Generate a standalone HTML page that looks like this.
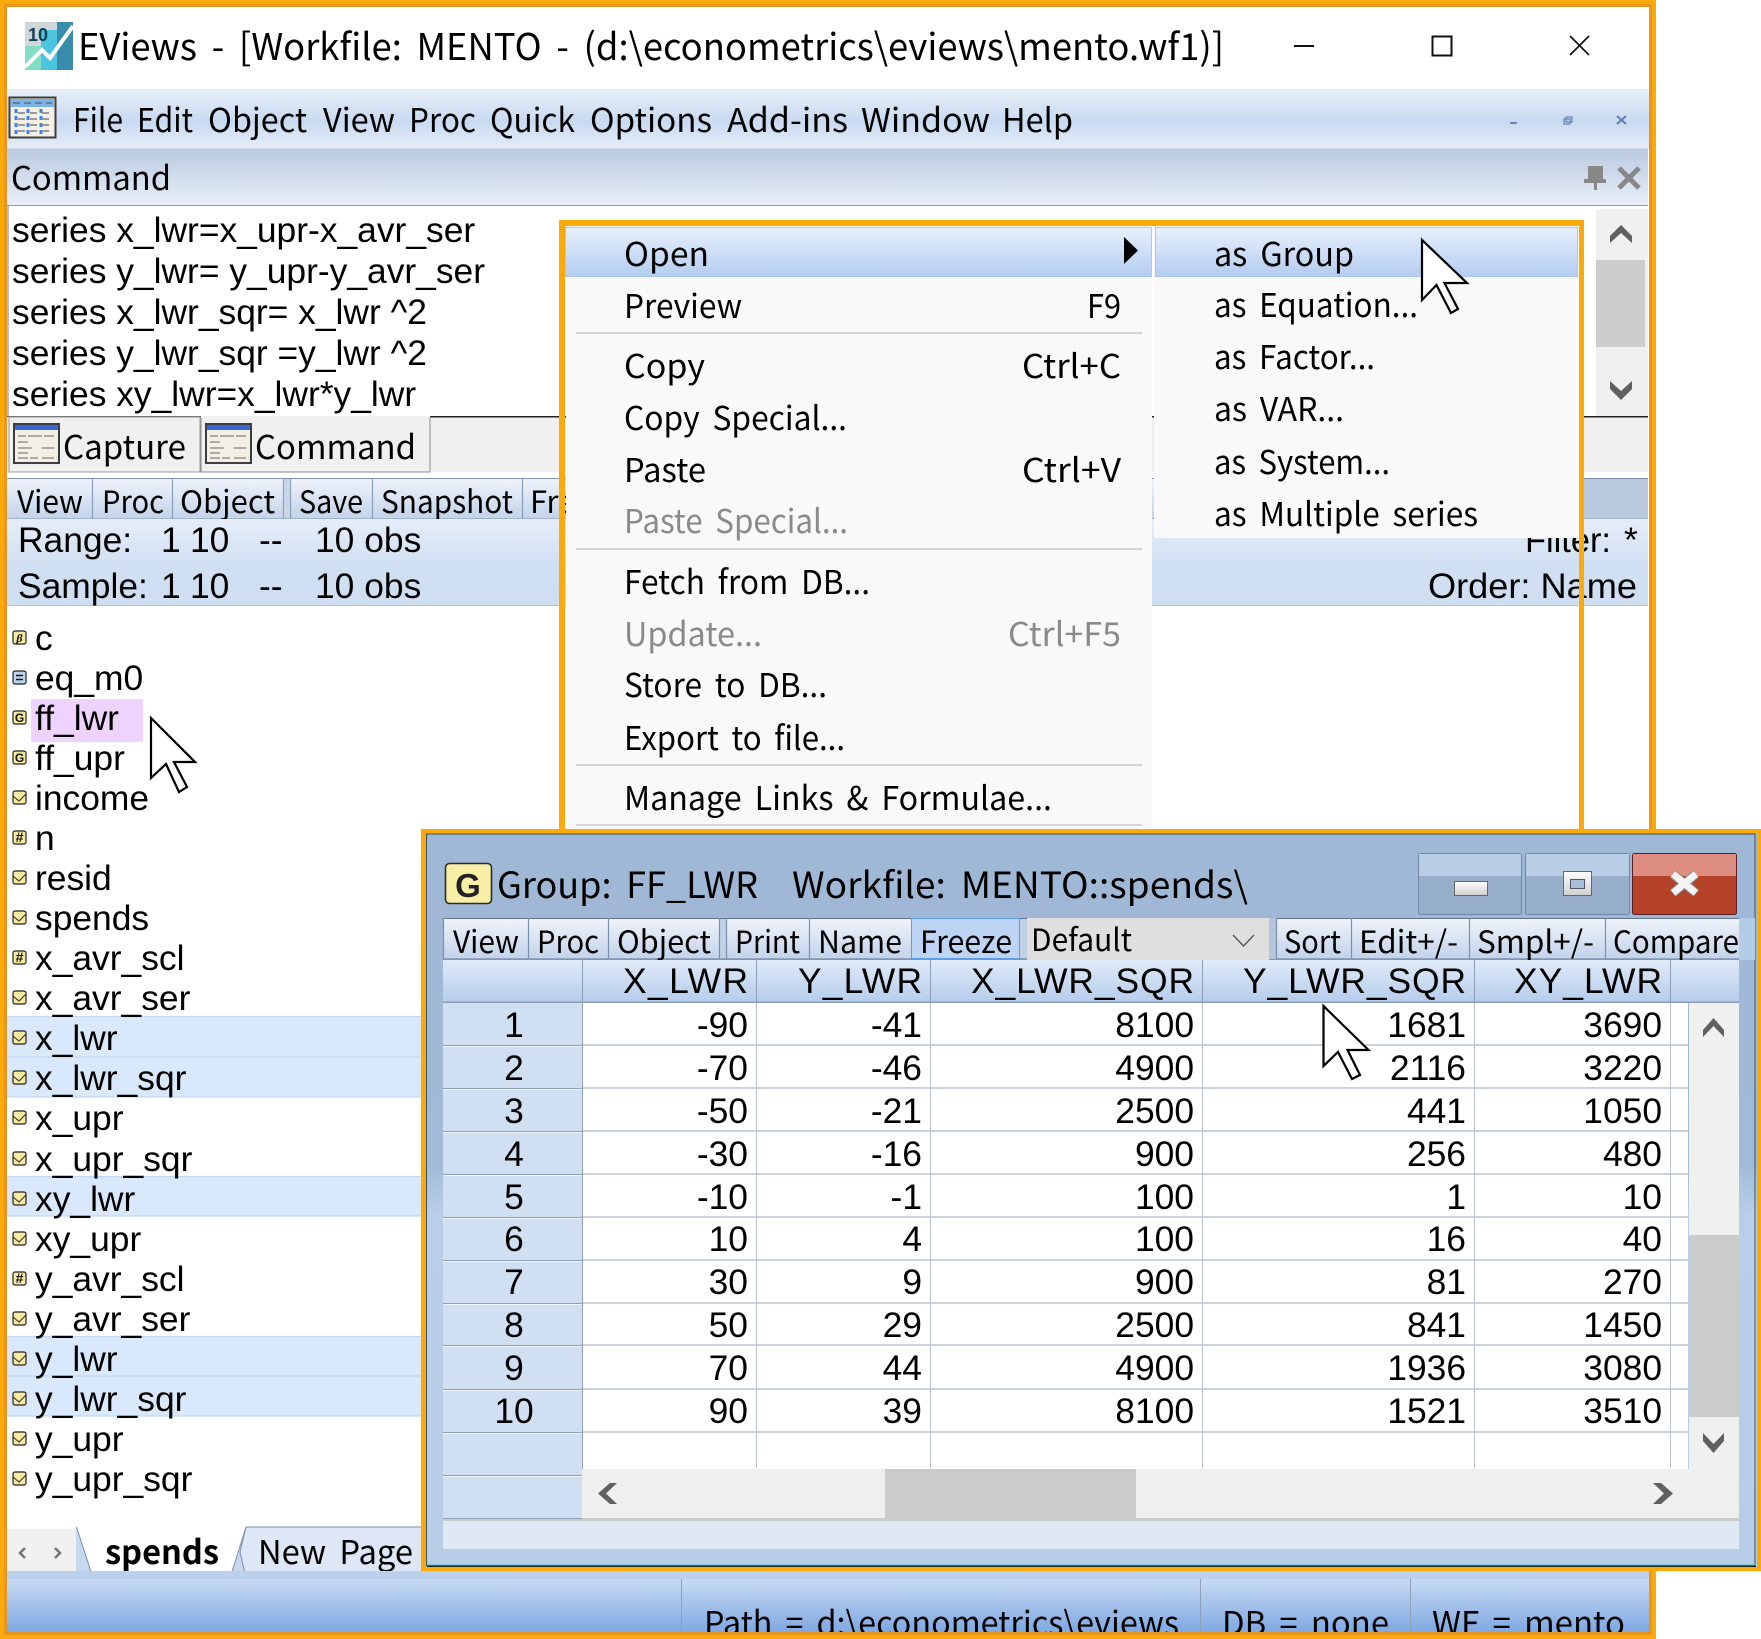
<!DOCTYPE html>
<html><head><meta charset="utf-8"><title>EViews</title>
<style>
html,body{margin:0;padding:0;background:#fff}
body{width:1761px;height:1639px;overflow:hidden;position:relative}
svg{position:absolute;left:0;top:0;display:block}
text{white-space:pre}
.a{font-family:"Liberation Sans",Arial,sans-serif;font-size:35.4px;fill:#000}
.s{font-family:"Noto Sans CJK JP","Liberation Sans",sans-serif;fill:#000;word-spacing:.18em}
.m{font-size:33px}
.t{font-size:31px}
.d{fill:#8a8a8a}
</style></head><body>
<svg width="1761" height="1639" viewBox="0 0 1761 1639" xmlns="http://www.w3.org/2000/svg">
<defs>
<linearGradient id="gMenu" x1="0" y1="0" x2="0" y2="1"><stop offset="0" stop-color="#E8EFF9"/><stop offset=".55" stop-color="#C8DAF1"/><stop offset="1" stop-color="#E4ECF8"/></linearGradient>
<linearGradient id="gCmd" x1="0" y1="0" x2="0" y2="1"><stop offset="0" stop-color="#BBCAE0"/><stop offset="1" stop-color="#E7EEF8"/></linearGradient>
<linearGradient id="gBar" x1="0" y1="0" x2="0" y2="1"><stop offset="0" stop-color="#F0F4FB"/><stop offset="1" stop-color="#C2D3EA"/></linearGradient>
<linearGradient id="gRange" x1="0" y1="0" x2="0" y2="1"><stop offset="0" stop-color="#E6EDF8"/><stop offset=".55" stop-color="#D0DFF2"/><stop offset="1" stop-color="#CFDEF1"/></linearGradient>
<linearGradient id="gHi" x1="0" y1="0" x2="0" y2="1"><stop offset="0" stop-color="#E8F0FC"/><stop offset="1" stop-color="#B3CDF1"/></linearGradient>
<linearGradient id="gStatus" x1="0" y1="0" x2="0" y2="1"><stop offset="0" stop-color="#C8DAF3"/><stop offset="1" stop-color="#7FA8E2"/></linearGradient>
<linearGradient id="gHead" x1="0" y1="0" x2="0" y2="1"><stop offset="0" stop-color="#E0EAF8"/><stop offset="1" stop-color="#B6CDEC"/></linearGradient>
<linearGradient id="gWin" x1="0" y1="0" x2="0" y2="1"><stop offset="0" stop-color="#9FB8D5"/><stop offset=".45" stop-color="#A1BAD7"/><stop offset=".52" stop-color="#B9CFE8"/><stop offset="1" stop-color="#B7CDE6"/></linearGradient>
<linearGradient id="gGlyph" x1="0" y1="0" x2="0" y2="1"><stop offset="0" stop-color="#fff"/><stop offset="1" stop-color="#CFCFCF"/></linearGradient>
</defs>

<!-- main window -->
<rect x="0" y="0" width="1656" height="1639" fill="#fff"/>
<rect x="7" y="89" width="1642" height="59" fill="url(#gMenu)"/>
<rect x="7" y="148" width="1642" height="1" fill="#D5DDE8"/>
<rect x="7" y="149" width="1641" height="56" fill="url(#gCmd)"/>
<rect x="7" y="205" width="1641" height="1" fill="#9A9A9A"/>
<rect x="7" y="206" width="2" height="210" fill="#BDBDBD"/>

<!-- logo -->
<rect x="25" y="22" width="16" height="48" fill="#83DDC3"/>
<rect x="25" y="22" width="16" height="24" fill="#CFD8D8"/>
<rect x="41" y="22" width="16" height="48" fill="#4CC4E0"/>
<rect x="41" y="22" width="16" height="8" fill="#CFD8D8"/>
<rect x="57" y="22" width="16" height="48" fill="#3A8CAC"/>
<path d="M25 67 L42 50 L50 58 L73 26" fill="none" stroke="#fff" stroke-width="4"/>
<text x="28" y="41" font-family="Liberation Sans,sans-serif" font-weight="bold" font-size="18" fill="#123F58">10</text>
<text class="s" x="78" y="60" font-size="37" textLength="1146" lengthAdjust="spacingAndGlyphs">EViews - [Workfile: MENTO - (d:\econometrics\eviews\mento.wf1)]</text>
<rect x="1294" y="45" width="20" height="2" fill="#111"/>
<rect x="1432.5" y="36.5" width="19" height="19" fill="none" stroke="#111" stroke-width="2"/>
<path d="M1570 36 L1589 55 M1589 36 L1570 55" stroke="#111" stroke-width="1.7" fill="none"/>

<!-- menu bar -->
<rect x="9.5" y="97.5" width="46" height="40" fill="#F2EFE4" stroke="#3D3D3D" stroke-width="2"/>
<rect x="11" y="99" width="43" height="8" fill="#7DB2E8"/>
<path d="M13 103 H52" stroke="#5f7f9f" stroke-width="2" stroke-dasharray="7 4"/>
<path d="M16 109 V136 M28 109 V136 M41 109 V136" stroke="#3D80EE" stroke-width="3" stroke-dasharray="4 3"/>
<path d="M18 113 H52 M18 119 H52 M18 125 H52 M18 131 H52" stroke="#9a9a9a" stroke-width="2" stroke-dasharray="7 5"/>
<g transform="translate(0,1)">
<text class="s m" x="73" y="131" textLength="50" lengthAdjust="spacingAndGlyphs">File</text>
<text class="s m" x="137" y="131" textLength="56" lengthAdjust="spacingAndGlyphs">Edit</text>
<text class="s m" x="208" y="131" textLength="99" lengthAdjust="spacingAndGlyphs">Object</text>
<text class="s m" x="323" y="131" textLength="72" lengthAdjust="spacingAndGlyphs">View</text>
<text class="s m" x="409" y="131" textLength="67" lengthAdjust="spacingAndGlyphs">Proc</text>
<text class="s m" x="490" y="131" textLength="85" lengthAdjust="spacingAndGlyphs">Quick</text>
<text class="s m" x="590" y="131" textLength="122" lengthAdjust="spacingAndGlyphs">Options</text>
<text class="s m" x="727" y="131" textLength="121" lengthAdjust="spacingAndGlyphs">Add-ins</text>
<text class="s m" x="861" y="131" textLength="129" lengthAdjust="spacingAndGlyphs">Window</text>
<text class="s m" x="1002" y="131" textLength="71" lengthAdjust="spacingAndGlyphs">Help</text>
</g>
<rect x="1510" y="122" width="7" height="2" fill="#6A86B4"/>
<rect x="1564" y="119" width="6" height="5" fill="none" stroke="#6A86B4" stroke-width="1.3"/><rect x="1566" y="117" width="6" height="5" fill="none" stroke="#6A86B4" stroke-width="1.3"/>
<path d="M1617 116 L1626 124 M1626 116 L1617 124" stroke="#5F7FB0" stroke-width="2"/>

<!-- command header -->
<text class="s m" x="11" y="190" fill="#222" textLength="160" lengthAdjust="spacingAndGlyphs">Command</text>
<path d="M1588 166 H1603 V179 H1606 V183 H1597 V190 H1594 V183 H1584 V179 H1588 Z" fill="#888"/>
<path d="M1619 168 L1639 188 M1639 168 L1619 188" stroke="#888" stroke-width="5"/>

<!-- command text -->
<text class="a" x="12" y="242">series x_lwr=x_upr-x_avr_ser</text>
<text class="a" x="12" y="283">series y_lwr= y_upr-y_avr_ser</text>
<text class="a" x="12" y="324">series x_lwr_sqr= x_lwr ^2</text>
<text class="a" x="12" y="365">series y_lwr_sqr =y_lwr ^2</text>
<text class="a" x="12" y="406">series xy_lwr=x_lwr*y_lwr</text>
<rect x="1596" y="209" width="52" height="207" fill="#F0F0F0"/>
<rect x="1596" y="260" width="49" height="87" fill="#CDCDCD"/>
<path d="M1610 243 V236 L1621 225 L1632 236 V243 L1621 233 Z" fill="#606060"/>
<path d="M1610 381 V389 L1621 400 L1632 389 V381 L1621 391 Z" fill="#606060"/>

<!-- tabs -->
<rect x="7" y="416" width="1641" height="56" fill="#F0F0F0"/>
<rect x="7" y="472" width="1641" height="47" fill="#fff"/>
<rect x="7" y="416" width="194" height="1" fill="#555"/>
<rect x="430" y="416" width="1218" height="1.5" fill="#222"/>
<rect x="9" y="417" width="191" height="55" fill="#F0F0F0" stroke="#999" stroke-width="1"/>
<rect x="201" y="417" width="229" height="55" fill="#F0F0F0" stroke="#8a8a8a" stroke-width="1"/>
<rect x="201" y="416" width="229" height="2" fill="#F0F0F0"/>
<rect x="14" y="424" width="45" height="39" fill="#F2EFE4" stroke="#3D3D3D" stroke-width="2"/>
<rect x="15" y="425" width="43" height="5" fill="#3C66D8"/>
<path d="M18 436 h8 m2 0 h14 m2 0 h10 M18 442 h10 M18 448 h14 m10 0 h12 M18 453 h10 M18 458 h10 m2 0 h8 m4 0 h12" stroke="#ABABAB" stroke-width="2"/>
<rect x="206" y="424" width="45" height="39" fill="#F2EFE4" stroke="#3D3D3D" stroke-width="2"/>
<rect x="207" y="425" width="43" height="5" fill="#3C66D8"/>
<path d="M210 436 h8 m2 0 h14 m2 0 h10 M210 442 h10 M210 448 h14 m10 0 h12 M210 453 h10 M210 458 h10 m2 0 h8 m4 0 h12" stroke="#ABABAB" stroke-width="2"/>
<text class="s m" x="63" y="459" fill="#222" textLength="123" lengthAdjust="spacingAndGlyphs">Capture</text>
<text class="s m" x="255" y="459" fill="#222" textLength="161" lengthAdjust="spacingAndGlyphs">Command</text>

<!-- workfile toolbar -->
<rect x="7" y="478" width="1641" height="41" fill="url(#gBar)"/>
<rect x="7" y="478" width="1641" height="1" fill="#7F93B0"/>
<rect x="7" y="518.5" width="1641" height="1" fill="#7F93B0"/>
<path d="M92.5 478 V519 M172.5 478 V519 M283.5 478 V519 M290.5 478 V519 M372.5 478 V519 M522.5 478 V519" stroke="#8A9DB8" stroke-width="1.2"/>
<rect x="284" y="479" width="6" height="39" fill="#C8D6E8"/>
<rect x="1584" y="479" width="64" height="39" fill="#BCCADE"/>
<text class="s t" x="17" y="513" textLength="66" lengthAdjust="spacingAndGlyphs">View</text>
<text class="s t" x="102" y="513" textLength="62" lengthAdjust="spacingAndGlyphs">Proc</text>
<text class="s t" x="180" y="513" textLength="95" lengthAdjust="spacingAndGlyphs">Object</text>
<text class="s t" x="299" y="513" textLength="64" lengthAdjust="spacingAndGlyphs">Save</text>
<text class="s t" x="381" y="513" textLength="132" lengthAdjust="spacingAndGlyphs">Snapshot</text>
<text class="s t" x="530" y="513">Freeze</text>

<!-- range -->
<rect x="7" y="519" width="1641" height="87" fill="url(#gRange)"/>
<rect x="7" y="605.5" width="1641" height="1" fill="#8FA3BD"/>
<g transform="translate(0,1)">
<text class="a" x="18" y="551">Range:</text>
<text class="a" x="161" y="551">1</text>
<text class="a" x="190" y="551">10</text>
<text class="a" x="259" y="551">--</text>
<text class="a" x="315" y="551">10 obs</text>
<text class="a" x="18" y="597">Sample:</text>
<text class="a" x="161" y="597">1</text>
<text class="a" x="190" y="597">10</text>
<text class="a" x="259" y="597">--</text>
<text class="a" x="315" y="597">10 obs</text>
<text class="a" x="1525" y="551" textLength="86" lengthAdjust="spacingAndGlyphs">Filter:</text>
<text class="a" x="1624" y="551">*</text>
<text class="a" x="1428" y="597" textLength="209" lengthAdjust="spacingAndGlyphs">Order: Name</text>
</g>

<!-- list -->
<rect x="7" y="606" width="1642" height="923" fill="#fff"/>
<rect x="31" y="699" width="112" height="43" fill="#EFD3FF"/>
<path d="M7 1016 H425 V1097 H7 Z M7 1176 H425 V1216 H7 Z M7 1336 H425 V1416 H7 Z" fill="#DAE8FB"/>
<path d="M7 1016.5 H425 M7 1057 H425 M7 1097 H425 M7 1176.5 H425 M7 1216 H425 M7 1336.5 H425 M7 1376 H425 M7 1416 H425" stroke="#C0D8F8" stroke-width="1.2"/>

<g stroke="#222" stroke-width="1.2">
<rect x="13" y="631" width="13" height="13" rx="2" fill="#F8EBA0"/>
<rect x="13" y="671" width="13" height="13" rx="2" fill="#BCD4F0"/>
<rect x="13" y="711" width="13" height="13" rx="2" fill="#F8EBA0"/>
<rect x="13" y="751" width="13" height="13" rx="2" fill="#F8EBA0"/>
<rect x="13" y="791" width="13" height="13" rx="2" fill="#F8EBA0"/>
<rect x="13" y="831" width="13" height="13" rx="2" fill="#F8EBA0"/>
<rect x="13" y="871" width="13" height="13" rx="2" fill="#F8EBA0"/>
<rect x="13" y="911" width="13" height="13" rx="2" fill="#F8EBA0"/>
<rect x="13" y="951" width="13" height="13" rx="2" fill="#F8EBA0"/>
<rect x="13" y="991" width="13" height="13" rx="2" fill="#F8EBA0"/>
<rect x="13" y="1031" width="13" height="13" rx="2" fill="#F8EBA0"/>
<rect x="13" y="1071" width="13" height="13" rx="2" fill="#F8EBA0"/>
<rect x="13" y="1111" width="13" height="13" rx="2" fill="#F8EBA0"/>
<rect x="13" y="1152" width="13" height="13" rx="2" fill="#F8EBA0"/>
<rect x="13" y="1192" width="13" height="13" rx="2" fill="#F8EBA0"/>
<rect x="13" y="1232" width="13" height="13" rx="2" fill="#F8EBA0"/>
<rect x="13" y="1272" width="13" height="13" rx="2" fill="#F8EBA0"/>
<rect x="13" y="1312" width="13" height="13" rx="2" fill="#F8EBA0"/>
<rect x="13" y="1352" width="13" height="13" rx="2" fill="#F8EBA0"/>
<rect x="13" y="1392" width="13" height="13" rx="2" fill="#F8EBA0"/>
<rect x="13" y="1432" width="13" height="13" rx="2" fill="#F8EBA0"/>
<rect x="13" y="1472" width="13" height="13" rx="2" fill="#F8EBA0"/>
</g>
<g font-family="Liberation Sans,sans-serif" font-size="12" font-weight="bold" fill="#111" text-anchor="middle">
<text x="19.5" y="642" font-style="italic" font-family="Liberation Serif,serif">β</text>
<text x="19.5" y="722">G</text>
<text x="19.5" y="762">G</text>
<text x="19.5" y="842" font-size="14">#</text>
<text x="19.5" y="962" font-size="14">#</text>
<text x="19.5" y="1283" font-size="14">#</text>
</g>
<path d="M16 675.5 H23 M16 679.5 H23" stroke="#111" stroke-width="1.6"/>
<g fill="none" stroke="#333" stroke-width="1.1">
<path d="M13 796 L19 801 L26 794"/>
<path d="M13 876 L19 881 L26 874"/>
<path d="M13 916 L19 921 L26 914"/>
<path d="M13 996 L19 1001 L26 994"/>
<path d="M13 1036 L19 1041 L26 1034"/>
<path d="M13 1076 L19 1081 L26 1074"/>
<path d="M13 1116 L19 1121 L26 1114"/>
<path d="M13 1157 L19 1162 L26 1155"/>
<path d="M13 1197 L19 1202 L26 1195"/>
<path d="M13 1237 L19 1242 L26 1235"/>
<path d="M13 1317 L19 1322 L26 1315"/>
<path d="M13 1357 L19 1362 L26 1355"/>
<path d="M13 1397 L19 1402 L26 1395"/>
<path d="M13 1437 L19 1442 L26 1435"/>
<path d="M13 1477 L19 1482 L26 1475"/>
</g>
<g transform="translate(0,1)">
<text class="a" x="35" y="649">c</text>
<text class="a" x="35" y="689">eq_m0</text>
<text class="a" x="35" y="729">ff_lwr</text>
<text class="a" x="35" y="769">ff_upr</text>
<text class="a" x="35" y="809">income</text>
<text class="a" x="35" y="849">n</text>
<text class="a" x="35" y="889">resid</text>
<text class="a" x="35" y="929">spends</text>
<text class="a" x="35" y="969">x_avr_scl</text>
<text class="a" x="35" y="1009">x_avr_ser</text>
<text class="a" x="35" y="1049">x_lwr</text>
<text class="a" x="35" y="1089">x_lwr_sqr</text>
<text class="a" x="35" y="1129">x_upr</text>
<text class="a" x="35" y="1170">x_upr_sqr</text>
<text class="a" x="35" y="1210">xy_lwr</text>
<text class="a" x="35" y="1250">xy_upr</text>
<text class="a" x="35" y="1290">y_avr_scl</text>
<text class="a" x="35" y="1330">y_avr_ser</text>
<text class="a" x="35" y="1370">y_lwr</text>
<text class="a" x="35" y="1410">y_lwr_sqr</text>
<text class="a" x="35" y="1450">y_upr</text>
<text class="a" x="35" y="1490">y_upr_sqr</text>
</g>

<!-- page tabs -->
<rect x="7" y="1529" width="69" height="50" fill="#F0F0F0"/>
<rect x="76" y="1527" width="360" height="52" fill="#C6D7EE"/>
<path d="M25 1548 L20 1553 L25 1558 M55 1548 L60 1553 L55 1558" fill="none" stroke="#777" stroke-width="2.5"/>
<path d="M246 1527 L240 1552 L246 1578 H426 V1527 Z" fill="#DDE7F5" stroke="#7C8FAC" stroke-width="1"/>
<path d="M76.5 1527 L93 1578 H230 L246 1527 Z" fill="#fff"/>
<path d="M76.5 1527 L93 1578 H230 L246 1527" fill="none" stroke="#7C8FAC" stroke-width="1"/>
<text class="s" x="105" y="1564" font-size="33" font-weight="bold" textLength="114" lengthAdjust="spacingAndGlyphs">spends</text>
<text class="s" x="258" y="1564" font-size="33" textLength="155" lengthAdjust="spacingAndGlyphs">New Page</text>

<!-- status -->
<rect x="7" y="1571" width="1642" height="8" fill="#BAD0EC"/>
<rect x="7" y="1579" width="1642" height="53" fill="url(#gStatus)"/>
<path d="M681.5 1579 V1632 M1200.5 1579 V1632 M1410.5 1579 V1632" stroke="#8D9FB9" stroke-width="1"/>
<text class="s" x="704" y="1635" font-size="33" textLength="475" lengthAdjust="spacingAndGlyphs">Path = d:\econometrics\eviews</text>
<text class="s" x="1222" y="1635" font-size="33" textLength="167" lengthAdjust="spacingAndGlyphs">DB = none</text>
<text class="s" x="1432" y="1635" font-size="33" textLength="193" lengthAdjust="spacingAndGlyphs">WF = mento</text>

<!-- outer frame -->
<rect x="0" y="0" width="1656" height="4" fill="#FBAA0A"/><rect x="0" y="4" width="1656" height="3" fill="#E8961F"/>
<rect x="0" y="0" width="4" height="1639" fill="#FBAA0A"/><rect x="4" y="4" width="3" height="1631" fill="#E8961F"/>
<rect x="1649" y="4" width="3" height="1631" fill="#E8961F"/><rect x="1652" y="0" width="4" height="1639" fill="#FBAA0A"/>
<rect x="4" y="1632" width="1648" height="3" fill="#E8961F"/><rect x="0" y="1635" width="1656" height="4" fill="#FBAA0A"/>

<!-- popup menu -->
<rect x="566" y="226" width="586" height="604" fill="#F9F9F9"/>
<rect x="1154" y="226" width="425" height="312" fill="#F9F9F9"/>
<rect x="565.5" y="227.5" width="586" height="49" fill="url(#gHi)" stroke="#A9C7F0"/>
<rect x="1155.5" y="227.5" width="422" height="49" fill="url(#gHi)" stroke="#A9C7F0"/>
<path d="M1124 237 L1138 250.5 L1124 264 Z" fill="#000"/>
<path d="M576 333 H1142 M576 549 H1142 M576 765 H1142 M576 825 H1142" stroke="#C9C9C9" stroke-width="1.5"/>
<g transform="translate(0,1)">
<text class="s m" x="624" y="265" textLength="85" lengthAdjust="spacingAndGlyphs">Open</text>
<text class="s m" x="624" y="317" textLength="118" lengthAdjust="spacingAndGlyphs">Preview</text>
<text class="s m" x="624" y="377" textLength="81" lengthAdjust="spacingAndGlyphs">Copy</text>
<text class="s m" x="624" y="429" textLength="223" lengthAdjust="spacingAndGlyphs">Copy Special...</text>
<text class="s m" x="624" y="481" textLength="82" lengthAdjust="spacingAndGlyphs">Paste</text>
<text class="s m d" x="624" y="532" textLength="224" lengthAdjust="spacingAndGlyphs">Paste Special...</text>
<text class="s m" x="624" y="593" textLength="246" lengthAdjust="spacingAndGlyphs">Fetch from DB...</text>
<text class="s m d" x="624" y="645" textLength="138" lengthAdjust="spacingAndGlyphs">Update...</text>
<text class="s m" x="624" y="696" textLength="203" lengthAdjust="spacingAndGlyphs">Store to DB...</text>
<text class="s m" x="624" y="749" textLength="221" lengthAdjust="spacingAndGlyphs">Export to file...</text>
<text class="s m" x="624" y="809" textLength="428" lengthAdjust="spacingAndGlyphs">Manage Links &amp; Formulae...</text>
<text class="s m" x="1087" y="317" textLength="34" lengthAdjust="spacingAndGlyphs">F9</text>
<text class="s m" x="1022" y="377" textLength="99" lengthAdjust="spacingAndGlyphs">Ctrl+C</text>
<text class="s m" x="1022" y="481" textLength="99" lengthAdjust="spacingAndGlyphs">Ctrl+V</text>
<text class="s m d" x="1008" y="645" textLength="113" lengthAdjust="spacingAndGlyphs">Ctrl+F5</text>
<text class="s m" x="1214" y="265" textLength="140" lengthAdjust="spacingAndGlyphs">as Group</text>
<text class="s m" x="1214" y="316" textLength="204" lengthAdjust="spacingAndGlyphs">as Equation...</text>
<text class="s m" x="1214" y="368" textLength="161" lengthAdjust="spacingAndGlyphs">as Factor...</text>
<text class="s m" x="1214" y="420" textLength="130" lengthAdjust="spacingAndGlyphs">as VAR...</text>
<text class="s m" x="1214" y="473" textLength="176" lengthAdjust="spacingAndGlyphs">as System...</text>
<text class="s m" x="1214" y="525" textLength="264" lengthAdjust="spacingAndGlyphs">as Multiple series</text>
</g>
<!-- popup orange -->
<rect x="559" y="220" width="1025" height="6" fill="#FBAA0A"/>
<rect x="559" y="220" width="6" height="612" fill="#FBAA0A"/>
<rect x="1579" y="220" width="5" height="612" fill="#FBAA0A"/>

<!-- cursors -->
<path d="M1422 240 V300 L1436.5 285 L1451 313 L1458 309 L1444.5 283 H1467 Z" fill="#fff" stroke="#000" stroke-width="2.2" stroke-linejoin="miter"/>
<path d="M151 718 V778 L166 764 L179 792 L187 787 L174 762 H195 Z" fill="#fff" stroke="#000" stroke-width="2.2"/>

<!-- group window -->
<rect x="421" y="829" width="1340" height="742" fill="#FBAA0A"/>
<rect x="426" y="833" width="1331" height="734" fill="url(#gWin)"/>
<path d="M426.5 1566 V834 H1755 V1566" fill="none" stroke="#3F4F63" stroke-width="1"/>
<rect x="427" y="1564.5" width="1329" height="1" fill="#37C4CE"/>
<rect x="427" y="1565.5" width="1329" height="1.5" fill="#222"/>

<rect x="445.5" y="863.5" width="46" height="40" rx="4" fill="#F9EEA6" stroke="#2B2B2B" stroke-width="1.6"/>
<text x="468" y="897" text-anchor="middle" font-family="Liberation Sans,sans-serif" font-weight="bold" font-size="33" fill="#222">G</text>
<text class="s" x="497" y="898" font-size="36" textLength="261" lengthAdjust="spacingAndGlyphs">Group: FF_LWR</text>
<text class="s" x="792" y="898" font-size="36" textLength="456" lengthAdjust="spacingAndGlyphs">Workfile: MENTO::spends\</text>

<rect x="1418.5" y="853.5" width="103" height="61" rx="2" fill="#97AECB" stroke="#6F88A8"/>
<rect x="1419" y="854" width="102" height="22" fill="#B8CEE6"/>
<rect x="1525.5" y="853.5" width="104" height="61" rx="2" fill="#97AECB" stroke="#6F88A8"/>
<rect x="1526" y="854" width="103" height="22" fill="#B8CEE6"/>
<rect x="1632.5" y="853.5" width="104" height="61" rx="2" fill="#B5432A" stroke="#5E1B22"/>
<rect x="1633" y="854" width="103" height="22" fill="#DE8E80"/>
<rect x="1454.5" y="881.5" width="33" height="14" fill="url(#gGlyph)" stroke="#666"/>
<rect x="1563.5" y="871.5" width="28" height="24" fill="url(#gGlyph)" stroke="#666"/>
<rect x="1570.5" y="879.5" width="14" height="9" fill="#A9BFD9" stroke="#556"/>
<path d="M1673 874 L1696 893 M1696 874 L1673 893" stroke="#8a8a8a" stroke-width="9"/>
<path d="M1673 874 L1696 893 M1696 874 L1673 893" stroke="#F4F4F4" stroke-width="7"/>

<!-- group toolbar -->
<rect x="443" y="918" width="1296" height="41" fill="url(#gBar)"/>
<rect x="443" y="918" width="1296" height="1" fill="#5F7391"/>
<rect x="443" y="958.5" width="1296" height="1" fill="#5F7391"/>
<rect x="1027" y="918" width="242" height="42" fill="#DFDFDF"/>
<rect x="1269" y="918" width="7" height="41" fill="#B4C5DC"/>
<rect x="720" y="919" width="6" height="39" fill="#C2D2E6"/>
<rect x="1020" y="919" width="7" height="39" fill="#C2D2E6"/>
<rect x="911.5" y="918.5" width="108" height="40" fill="#BDD4F4" stroke="#5A9BE8"/>
<path d="M443.5 918 V959 M528.5 918 V959 M608.5 918 V959 M719.5 918 V959 M726.5 918 V959 M809.5 918 V959 M1276.5 918 V959 M1351.5 918 V959 M1469.5 918 V959 M1605.5 918 V959" stroke="#7B8FAD" stroke-width="1.2"/>
<g transform="translate(0,1)">
<text class="s t" x="453" y="952" textLength="66" lengthAdjust="spacingAndGlyphs">View</text>
<text class="s t" x="537" y="952" textLength="62" lengthAdjust="spacingAndGlyphs">Proc</text>
<text class="s t" x="617" y="952" textLength="94" lengthAdjust="spacingAndGlyphs">Object</text>
<text class="s t" x="735" y="952" textLength="65" lengthAdjust="spacingAndGlyphs">Print</text>
<text class="s t" x="818" y="952" textLength="84" lengthAdjust="spacingAndGlyphs">Name</text>
<text class="s t" x="920" y="952" textLength="92" lengthAdjust="spacingAndGlyphs">Freeze</text>
<text class="s t" x="1031" y="950" textLength="101" lengthAdjust="spacingAndGlyphs">Default</text>
<text class="s t" x="1284" y="952" textLength="57" lengthAdjust="spacingAndGlyphs">Sort</text>
<text class="s t" x="1359" y="952" textLength="99" lengthAdjust="spacingAndGlyphs">Edit+/-</text>
<text class="s t" x="1477" y="952" textLength="117" lengthAdjust="spacingAndGlyphs">Smpl+/-</text>
<text class="s t" x="1613" y="952" textLength="126" lengthAdjust="spacingAndGlyphs">Compare</text>
</g>
<path d="M1233 935 L1243.5 946 L1254 935" fill="none" stroke="#555" stroke-width="1.4"/>
<rect x="1739" y="918" width="16" height="42" fill="#B4CBE5"/>

<!-- header row -->
<rect x="443" y="960" width="1296" height="42" fill="url(#gHead)"/>
<rect x="443" y="1001.5" width="1296" height="1.5" fill="#8C9DB5"/>
<path d="M582.5 960 V1002 M756.5 960 V1002 M930.5 960 V1002 M1202.5 960 V1002 M1474.5 960 V1002 M1670.5 960 V1002" stroke="#8C9DB5" stroke-width="1"/>
<text class="a" x="623" y="993" textLength="125">X_LWR</text>
<text class="a" x="798" y="993" textLength="124">Y_LWR</text>
<text class="a" x="971" y="993" textLength="223">X_LWR_SQR</text>
<text class="a" x="1243" y="993" textLength="223">Y_LWR_SQR</text>
<text class="a" x="1514" y="993" textLength="148">XY_LWR</text>

<!-- row header + data -->
<rect x="443" y="1003" width="139" height="515" fill="#D0DFF2"/>
<rect x="582" y="1003" width="1106" height="466" fill="#fff"/>
<g stroke="#B9C3D3" stroke-width="1.5">
<path d="M582 1045 H1688 M582 1088 H1688 M582 1131 H1688 M582 1174 H1688 M582 1217 H1688 M582 1260 H1688 M582 1303 H1688 M582 1345 H1688 M582 1389 H1688 M582 1432 H1688"/>
<path d="M756.5 1003 V1468 M930.5 1003 V1468 M1202.5 1003 V1468 M1474.5 1003 V1468 M1670.5 1003 V1468" stroke-width="1"/>
</g>
<g stroke="#8E9FB8" stroke-width="1">
<path d="M443 1045.5 H582 M443 1088.5 H582 M443 1131.5 H582 M443 1174.5 H582 M443 1217.5 H582 M443 1260.5 H582 M443 1303.5 H582 M443 1345.5 H582 M443 1389.5 H582 M443 1432.5 H582 M443 1475.5 H582 M443 1518.5 H582 M582.5 1003 V1518"/>
</g>
<g stroke="#F2F6FC" stroke-width="1">
<path d="M443 1046.5 H582 M443 1089.5 H582 M443 1132.5 H582 M443 1175.5 H582 M443 1218.5 H582 M443 1261.5 H582 M443 1304.5 H582 M443 1346.5 H582 M443 1390.5 H582 M443 1433.5 H582 M443 1476.5 H582"/>
</g>
<g text-anchor="middle">
<text class="a" x="514" y="1037">1</text><text class="a" x="514" y="1080">2</text><text class="a" x="514" y="1123">3</text><text class="a" x="514" y="1166">4</text><text class="a" x="514" y="1209">5</text><text class="a" x="514" y="1251">6</text><text class="a" x="514" y="1294">7</text><text class="a" x="514" y="1337">8</text><text class="a" x="514" y="1380">9</text><text class="a" x="514" y="1423">10</text>
</g>
<g text-anchor="end">
<text class="a" x="748" y="1037">-90</text><text class="a" x="922" y="1037">-41</text><text class="a" x="1194" y="1037">8100</text><text class="a" x="1466" y="1037">1681</text><text class="a" x="1662" y="1037">3690</text>
<text class="a" x="748" y="1080">-70</text><text class="a" x="922" y="1080">-46</text><text class="a" x="1194" y="1080">4900</text><text class="a" x="1466" y="1080">2116</text><text class="a" x="1662" y="1080">3220</text>
<text class="a" x="748" y="1123">-50</text><text class="a" x="922" y="1123">-21</text><text class="a" x="1194" y="1123">2500</text><text class="a" x="1466" y="1123">441</text><text class="a" x="1662" y="1123">1050</text>
<text class="a" x="748" y="1166">-30</text><text class="a" x="922" y="1166">-16</text><text class="a" x="1194" y="1166">900</text><text class="a" x="1466" y="1166">256</text><text class="a" x="1662" y="1166">480</text>
<text class="a" x="748" y="1209">-10</text><text class="a" x="922" y="1209">-1</text><text class="a" x="1194" y="1209">100</text><text class="a" x="1466" y="1209">1</text><text class="a" x="1662" y="1209">10</text>
<text class="a" x="748" y="1251">10</text><text class="a" x="922" y="1251">4</text><text class="a" x="1194" y="1251">100</text><text class="a" x="1466" y="1251">16</text><text class="a" x="1662" y="1251">40</text>
<text class="a" x="748" y="1294">30</text><text class="a" x="922" y="1294">9</text><text class="a" x="1194" y="1294">900</text><text class="a" x="1466" y="1294">81</text><text class="a" x="1662" y="1294">270</text>
<text class="a" x="748" y="1337">50</text><text class="a" x="922" y="1337">29</text><text class="a" x="1194" y="1337">2500</text><text class="a" x="1466" y="1337">841</text><text class="a" x="1662" y="1337">1450</text>
<text class="a" x="748" y="1380">70</text><text class="a" x="922" y="1380">44</text><text class="a" x="1194" y="1380">4900</text><text class="a" x="1466" y="1380">1936</text><text class="a" x="1662" y="1380">3080</text>
<text class="a" x="748" y="1423">90</text><text class="a" x="922" y="1423">39</text><text class="a" x="1194" y="1423">8100</text><text class="a" x="1466" y="1423">1521</text><text class="a" x="1662" y="1423">3510</text>
</g>

<!-- scrollbars -->
<rect x="1689" y="1003" width="50" height="466" fill="#F0F0F0"/>
<rect x="1689" y="1235" width="50" height="182" fill="#CBCBCB"/>
<path d="M1703 1037 V1030 L1713.5 1018 L1724 1030 V1037 L1713.5 1026 Z" fill="#606060"/>
<path d="M1703 1433 V1441 L1713.5 1453 L1724 1441 V1433 L1713.5 1444 Z" fill="#606060"/>
<rect x="582" y="1469" width="1157" height="49" fill="#EFEFEF"/>
<rect x="885" y="1469" width="251" height="49" fill="#CBCBCB"/>
<path d="M617 1483 H610 L598 1493.5 L610 1504 H617 L606 1493.5 Z" fill="#606060"/>
<path d="M1653 1483 H1661 L1673 1493.5 L1661 1504 H1653 L1664 1493.5 Z" fill="#606060"/>
<rect x="443" y="1518" width="1296" height="3" fill="#CCCCCC"/>
<rect x="443" y="1521" width="1296" height="28" fill="#DFE9F6"/>
<rect x="443" y="1518" width="139" height="1" fill="#8E9FB8"/>

<!-- cursor over table -->
<path d="M1323.5 1006 V1066 L1338 1052 L1352 1079 L1360 1075 L1347.5 1050 H1368.5 Z" fill="#fff" stroke="#000" stroke-width="2.2"/>
</svg>
</body></html>
